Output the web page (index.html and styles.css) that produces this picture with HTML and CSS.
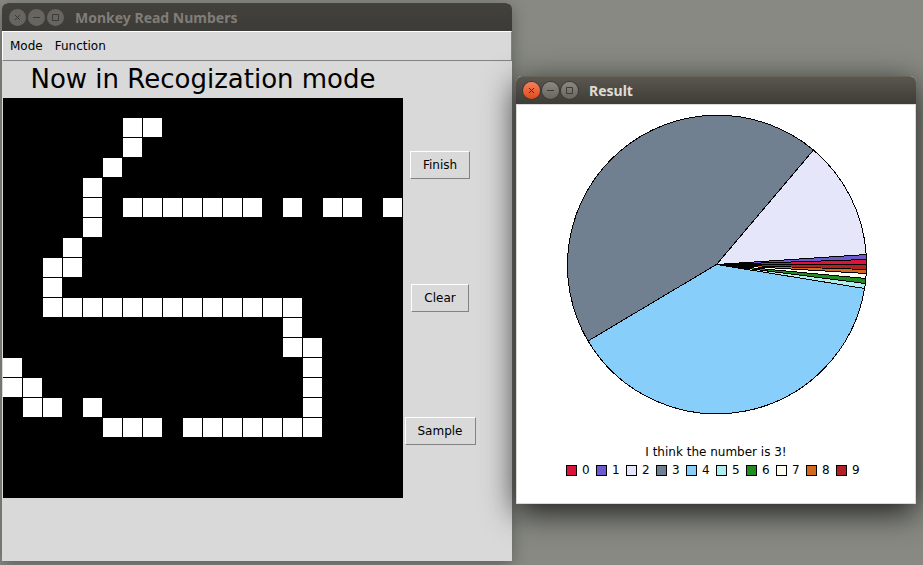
FILE: index.html
```html
<!DOCTYPE html>
<html lang="en">
<head>
<meta charset="utf-8">
<title>Monkey Read Numbers</title>
<link rel="stylesheet" href="styles.css">
</head>
<body>
<main class="desktop">
  <section class="window window-main">
    <header class="titlebar inactive">
      <button class="control" type="button" aria-label="Close"><svg viewBox="0 0 17 17"><path d="M6 6l5 5M11 6l-5 5"/></svg></button>
      <button class="control" type="button" aria-label="Minimize"><svg viewBox="0 0 17 17"><path d="M5 8.5h7"/></svg></button>
      <button class="control" type="button" aria-label="Maximize"><svg viewBox="0 0 17 17"><path d="M5.500 5.500h6v6h-6z"/></svg></button>
      <h1 class="title">Monkey Read Numbers</h1>
    </header>
    <nav class="menubar">
      <button class="menu" type="button">Mode</button>
      <button class="menu" type="button">Function</button>
    </nav>
    <div class="workspace">
      <h2 class="mode">Now in Recogization mode</h2>
      <svg class="board" viewBox="0 0 20 20" shape-rendering="crispEdges" role="img" aria-label="Drawing board">
        <defs><pattern id="grid" width="1" height="1" patternUnits="userSpaceOnUse"><path d="M0 0h.95v.95H0z" fill="#fff"/></pattern></defs>
        <path fill="#000" d="M0 0h20v20H0z"/>
        <path fill="url(#grid)" d="M6 1h2v1H6zM6 2h1v1H6zM5 3h1v1H5zM4 4h1v3H4zM6 5h7v1H6zM14 5h1v1h-1zM16 5h2v1h-2zM19 5h1v1h-1zM3 7h1v1H3zM2 8h2v1H2zM2 9h1v1H2zM2 10h13v1H2zM14 11h1v1h-1zM14 12h2v1h-2zM0 13h1v1H0zM15 13h1v3h-1zM0 14h2v1H0zM1 15h2v1H1zM4 15h1v1H4zM5 16h3v1H5zM9 16h7v1H9z"/>
      </svg>
      <div class="actions">
        <button class="action" type="button">Finish</button>
        <button class="action" type="button">Clear</button>
        <button class="action" type="button">Sample</button>
      </div>
    </div>
  </section>

  <section class="window window-result">
    <header class="titlebar">
      <button class="control close" type="button" aria-label="Close"><svg viewBox="0 0 17 17"><path d="M6 6l5 5M11 6l-5 5"/></svg></button>
      <button class="control" type="button" aria-label="Minimize"><svg viewBox="0 0 17 17"><path d="M5 8.5h7"/></svg></button>
      <button class="control" type="button" aria-label="Maximize"><svg viewBox="0 0 17 17"><path d="M5.500 5.500h6v6h-6z"/></svg></button>
      <h1 class="title">Result</h1>
    </header>
    <div class="result">
      <svg class="pie" viewBox="-.5 -.5 302 302" shape-rendering="crispEdges" role="img" aria-label="Share of each digit">
        <g stroke="#000" stroke-width="1" stroke-linejoin="bevel">
          <path class="d4" d="M151 151L299.100 175A150 150 0 0 1 22.500 227.500z"/>
          <path class="d3" d="M151 151L22.500 227.500A150 150 0 0 1 248 36.500z"/>
          <path class="d2" d="M151 151L248 36.500A150 150 0 0 1 300.700 141z"/>
          <path class="d5" d="M151 151L299.800 170A150 150 0 0 1 299.100 175z"/>
          <path class="d6" d="M151 151L300.300 165A150 150 0 0 1 299.800 170z"/>
          <path class="d7" d="M151 151L300.700 160A150 150 0 0 1 300.300 165z"/>
          <path class="d8" d="M151 151L300.900 156A150 150 0 0 1 300.700 160z"/>
          <path class="d9" d="M151 151L301 151A150 150 0 0 1 300.900 156z"/>
          <path class="d1" d="M151 151L300.700 141A150 150 0 0 1 300.900 146z"/>
          <path class="d0" d="M151 151L300.900 146A150 150 0 0 1 301 151z"/>
        </g>
      </svg>
      <p class="verdict">I think the number is 3!</p>
      <ul class="legend">
        <li><i class="swatch d0"></i>0</li>
        <li><i class="swatch d1"></i>1</li>
        <li><i class="swatch d2"></i>2</li>
        <li><i class="swatch d3"></i>3</li>
        <li><i class="swatch d4"></i>4</li>
        <li><i class="swatch d5"></i>5</li>
        <li><i class="swatch d6"></i>6</li>
        <li><i class="swatch d7"></i>7</li>
        <li><i class="swatch d8"></i>8</li>
        <li><i class="swatch d9"></i>9</li>
      </ul>
    </div>
  </section>
</main>
</body>
</html>
```
FILE: styles.css
```css
* { box-sizing: border-box; }

body {
  margin: 0;
  font: 12px/16px "DejaVu Sans", sans-serif;
  color: #000;
}

button {
  font: inherit;
  color: inherit;
}

h1, h2, p, ul { margin: 0; padding: 0; }

.desktop {
  position: relative;
  min-height: 100vh;
  overflow: hidden;
  background: #878982;
}

/* Windows are placed freely on the desktop */
.window {
  position: absolute;
  border-radius: 6px 6px 0 0;
}

.window-main {
  left: 2px;
  top: 3px;
  width: 510px;
  background: #d9d9d9;
  box-shadow: 0 4px 16px rgba(0, 0, 0, .3);
}

.window-result {
  left: 516px;
  top: 76px;
  width: 400px;
  background: #fff;
  box-shadow: 0 8px 32px rgba(0, 0, 0, .8);
}

.titlebar {
  display: flex;
  align-items: center;
  gap: 2px;
  height: 28px;
  padding: 0 7px;
  border-radius: 6px 6px 0 0;
  border-top: 1px solid #66645a;
  background: linear-gradient(#59574e, #3e3c37);
  color: #dfdbd2;
}

.titlebar.inactive {
  border-top-color: #45443f;
  background: linear-gradient(#42413c, #3c3b37);
  color: #807d78;
}

.title {
  margin-left: 9px;
  font: bold 14px/20px "Noto Sans", sans-serif;
}

.control {
  width: 17px;
  height: 17px;
  padding: 0;
  border: 0;
  border-radius: 50%;
  background: linear-gradient(#8b897f, #67655e);
  box-shadow: 0 0 0 1px #3b3a35;
}

.control svg {
  display: block;
  fill: none;
  stroke: #3c3b37;
  stroke-width: 1;
}

.control.close { background: linear-gradient(#f4805e, #df4a1b); }
.control.close svg { stroke: #5c1e0a; }

.inactive .control {
  background: #66655f;
  box-shadow: none;
}

.menubar {
  display: flex;
  gap: 12px;
  height: 30px;
  padding: 0 7px;
  border: 1px solid;
  border-color: #fff #828282 #828282 #fff;
}

.menu {
  padding: 0;
  border: 0;
  background: none;
}

.workspace {
  display: grid;
  grid-template-columns: 400px 74px;
  padding: 0 1px 63px;
}

.mode {
  grid-column: 1;
  font-size: 26px;
  font-weight: normal;
  line-height: 37px;
  text-align: center;
  white-space: nowrap;
}

.board {
  grid-column: 1;
  display: block;
  width: 100%;
}

.actions {
  display: flex;
  flex-direction: column;
  align-items: center;
  justify-content: space-around;
}

.action {
  padding: 5px 12px;
  border: 1px solid;
  border-color: #fff #828282 #828282 #fff;
  background: #d9d9d9;
}

.result {
  display: flex;
  flex-direction: column;
  align-items: center;
  padding: 8px 0 25px;
  border: 1px solid #d9d9d9;
}

.pie {
  display: block;
  width: 302px;
}

.verdict { margin-top: 29px; }

.legend {
  display: grid;
  grid-template-columns: repeat(10, 30px);
  margin-top: 2px;
  list-style: none;
}

.legend li {
  display: flex;
  align-items: center;
  gap: 5px;
}

.swatch {
  width: 11px;
  height: 11px;
  border: 1px solid #000;
}

.d0 { fill: #dc143c; background: #dc143c; }
.d1 { fill: #6a5acd; background: #6a5acd; }
.d2 { fill: #e6e6fa; background: #e6e6fa; }
.d3 { fill: #708090; background: #708090; }
.d4 { fill: #87cefa; background: #87cefa; }
.d5 { fill: #afeeee; background: #afeeee; }
.d6 { fill: #228b22; background: #228b22; }
.d7 { fill: #fffff0; background: #fffff0; }
.d8 { fill: #d2691e; background: #d2691e; }
.d9 { fill: #b22222; background: #b22222; }
```
